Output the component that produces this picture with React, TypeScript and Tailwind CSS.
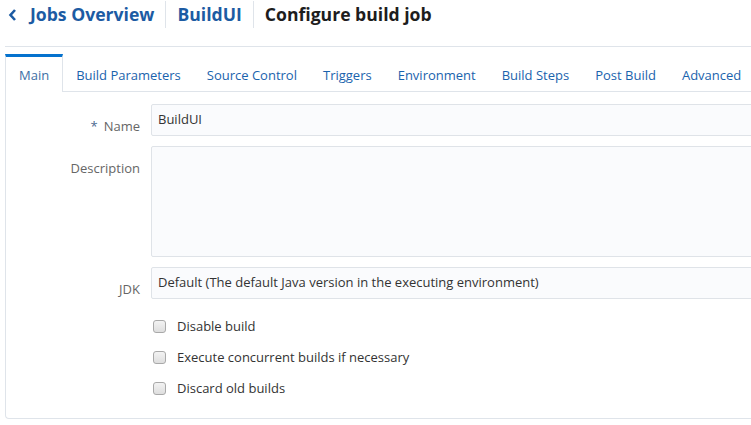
import React from "react";

const tabs = ["Main", "Build Parameters", "Source Control", "Triggers", "Environment", "Build Steps", "Post Build", "Advanced"];

export default function App() {
  const font = { fontFamily: '"Open Sans", "Noto Sans", sans-serif' };
  return (
    <div className="w-[751px] h-[425px] bg-white overflow-hidden pl-[5px]" style={font}>
      <div className="h-[47px] border-b border-[#dfe4ea] flex items-start pt-[2px] w-[800px]">
        <div className="flex items-center h-[25px] text-[17.6px] font-bold">
          <svg width="10" height="14" viewBox="0 0 10 14" className="ml-[3px] mr-[12px]">
            <path d="M7 2 L2.5 7 L7 12" fill="none" stroke="#1c5ba3" strokeWidth="2.6" />
          </svg>
          <span className="text-[#1c5ba3] pr-[11px] border-r border-[#dfe4ea]">Jobs Overview</span>
          <span className="text-[#1c5ba3] px-[11px] border-r border-[#dfe4ea]">BuildUI</span>
          <span className="text-[#1d1d1d] px-[11px]">Configure build job</span>
        </div>
      </div>
      <div className="mt-[7px] w-[800px]">
        <div className="flex h-[38px] text-[13px]">
          {tabs.map((t, i) =>
            i === 0 ? (
              <div key={t} className="h-[38px] px-[13px] pt-[3px] border-t-[3px] border-t-[#0572ce] border-l border-r border-[#dfe4ea] flex items-center text-[#3e6fa5]">
                {t}
              </div>
            ) : (
              <div key={t} className="h-[38px] px-[13px] border-b border-[#dfe4ea] flex items-center text-[#1a63ad] pt-[6px]">
                {t}
              </div>
            )
          )}
          <div className="flex-1 border-b border-[#dfe4ea]" />
        </div>
        <div className="border-l border-b border-[#dfe4ea] rounded-bl-[4px] h-[327px] pt-[12px] text-[13px]">
          <div className="flex">
            <div className="w-[134px] text-right text-[#666] pt-[13px]">
              <span className="text-[#4b6a8f] mr-[6px]">*</span>Name
            </div>
            <div className="ml-[11px] flex-1 h-[32px] border border-[#dfe3e8] rounded-[2px] bg-[#fafbfd] flex items-center px-[6px] text-[#333]">
              BuildUI
            </div>
          </div>
          <div className="flex mt-[9px]">
            <div className="w-[134px] text-right text-[#666] pt-[13px]">Description</div>
            <div className="ml-[11px] flex-1 h-[111px] border border-[#dfe3e8] rounded-[2px] bg-[#fafbfd]" />
          </div>
          <div className="flex mt-[10px]">
            <div className="w-[134px] text-right text-[#666] pt-[13px]">JDK</div>
            <div className="ml-[11px] flex-1 h-[32px] border border-[#dfe3e8] rounded-[2px] bg-[#fafbfd] flex items-center px-[6px] text-[#333]">
              Default (The default Java version in the executing environment)
            </div>
          </div>
          <div className="ml-[147px] mt-[18px] flex flex-col gap-[12px] text-[#333]">
            {["Disable build", "Execute concurrent builds if necessary", "Discard old builds"].map((c) => (
              <div key={c} className="flex items-center h-[19px]">
                <div className="w-[13px] h-[13px] border border-[#a9a9a9] rounded-[3px] bg-gradient-to-b from-[#f3f3f3] to-[#dedede] mr-[11px]" />
                <span>{c}</span>
              </div>
            ))}
          </div>
        </div>
      </div>
    </div>
  );
}
